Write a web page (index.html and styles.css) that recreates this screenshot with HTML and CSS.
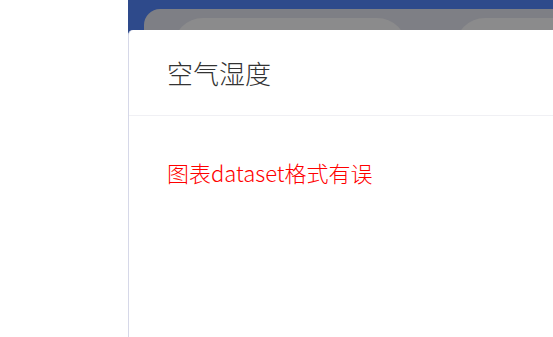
FILE: index.html
```html
<!DOCTYPE html>
<html lang="zh">
<head>
<meta charset="utf-8">
<link rel="stylesheet" href="styles.css">
</head>
<body>
<div class="page">
  <div class="side"></div>
  <div class="main">
    <div class="backdrop">
      <div class="layer">
        <div class="blob blob-a"></div>
        <div class="blob blob-b"></div>
      </div>
    </div>
    <div class="card">
      <div class="card-head">空气湿度</div>
      <div class="card-body">
        <p class="error">图表dataset格式有误</p>
      </div>
    </div>
  </div>
</div>
</body>
</html>
```
FILE: styles.css
```css
html, body {
  margin: 0;
  padding: 0;
  width: 553px;
  height: 337px;
  overflow: hidden;
  background: #ffffff;
  font-family: "Noto Sans CJK SC", "Noto Sans", sans-serif;
}
.page {
  display: flex;
  height: 337px;
}
.side {
  width: 128px;
  flex: none;
  background: #ffffff;
}
.main {
  flex: 1;
  position: relative;
  background: #2e4a8b;
  overflow: hidden;
}
.backdrop {
  position: absolute;
  left: 16px;
  top: 9px;
  right: -40px;
  height: 60px;
}
.layer {
  position: relative;
  height: 100%;
  background: #7e7f85;
  border-radius: 16px 16px 0 0;
}
.blob {
  position: absolute;
  top: 9px;
  height: 60px;
  background: #8b8b8c;
  border-radius: 30px;
}
.blob-a {
  left: 29px;
  width: 234px;
}
.blob-b {
  left: 311px;
  width: 200px;
}
.card {
  position: absolute;
  left: 0;
  top: 30px;
  right: 0;
  bottom: 0;
  background: #ffffff;
  border-left: 1px solid #d6d8e8;
  border-top-left-radius: 5px;
}
.card-head {
  height: 86px;
  box-sizing: border-box;
  padding: 0 0 0 38px;
  display: flex;
  align-items: center;
  font-size: 26px;
  font-weight: 300;
  color: #333333;
  border-bottom: 1px solid #f0f0f4;
}
.card-body {
  padding: 0 0 0 38px;
}
.error {
  margin: 32px 0 0 0;
  font-size: 22px;
  font-weight: 300;
  line-height: 48px;
  color: #ff0000;
}
```
